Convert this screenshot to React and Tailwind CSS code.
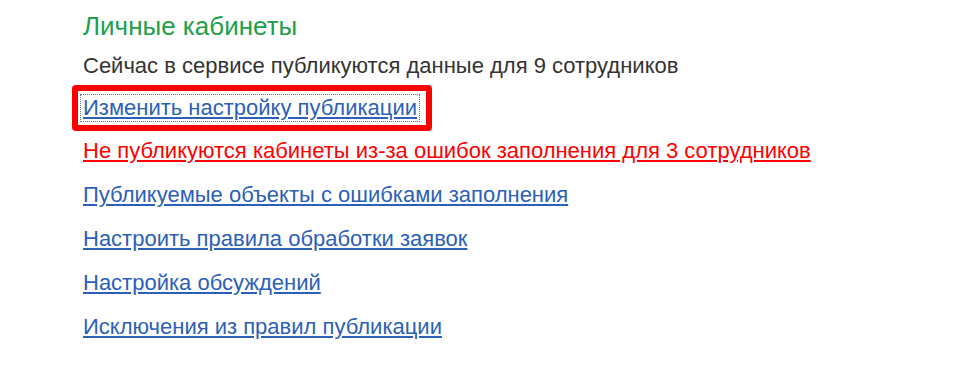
export default function App() {
  const links = [
    'Публикуемые объекты с ошибками заполнения',
    'Настроить правила обработки заявок',
    'Настройка обсуждений',
    'Исключения из правил публикации',
  ];

  return (
    <div className="w-[956px] h-[376px] bg-white font-['Liberation_Sans',Arial,sans-serif] pl-[83px] pt-[11px]">
      <h1 className="text-[26px] leading-[30px] text-[#1ea04a]">Личные кабинеты</h1>
      <p className="mt-[12px] text-[22px] leading-[26px] text-[#333333]">
        Сейчас в сервисе публикуются данные для 9 сотрудников
      </p>
      <div className="ml-[-11px] mt-[6px] w-[360px] h-[46px] border-[6px] border-[#ff0000] rounded-[4px] flex items-center pl-[3px]">
        <a href="#" className="text-[22px] leading-[26px] text-[#2c5fb8] underline outline-1 outline-dotted outline-[#5577aa] px-[2px]">
          Изменить настройку публикации
        </a>
      </div>
      <div className="mt-[7px] flex flex-col gap-[18px]">
        <a href="#" className="self-start text-[22px] leading-[26px] text-[#ff0000] underline">
          Не публикуются кабинеты из-за ошибок заполнения для 3 сотрудников
        </a>
        {links.map((l) => (
          <a key={l} href="#" className="self-start text-[22px] leading-[26px] text-[#2c5fb8] underline">
            {l}
          </a>
        ))}
      </div>
    </div>
  );
}
